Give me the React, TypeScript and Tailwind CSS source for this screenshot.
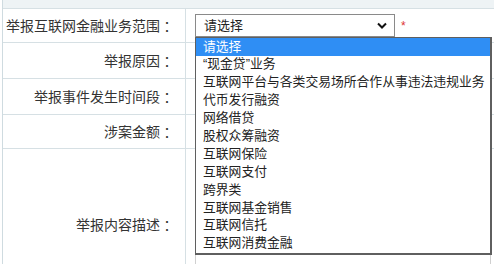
import React from 'react';

const options = [
  '请选择',
  '“现金贷”业务',
  '互联网平台与各类交易场所合作从事违法违规业务',
  '代币发行融资',
  '网络借贷',
  '股权众筹融资',
  '互联网保险',
  '互联网支付',
  '跨界类',
  '互联网基金销售',
  '互联网信托',
  '互联网消费金融',
];

const rows = [
  { label: '举报互联网金融业务范围', h: 'h-[34px]' },
  { label: '举报原因', h: 'h-[36px]' },
  { label: '举报事件发生时间段', h: 'h-[36px]' },
  { label: '涉案金额', h: 'h-[34px]' },
  { label: '举报内容描述', h: 'h-[152px]' },
];

export default function App() {
  return (
    <div className="relative h-[264px] w-[494px] overflow-hidden bg-white pl-[2px] font-['Liberation_Sans','Noto_Sans_CJK_SC',sans-serif] text-[#333]">
      <div className="border-l border-[#cfdbe0]">
        {/* tail of the previous row */}
        <div className="h-[9px] border-b border-[#d6e0e4] bg-[#eef3f5]" />

        {rows.map((row, i) => (
          <div
            key={i}
            className={`grid grid-cols-[183px_1fr] border-b border-[#d6e0e4] ${row.h}`}
          >
            <div className="flex items-center justify-end border-r border-[#d6e0e4] pr-[11px] text-[14px] leading-none whitespace-nowrap">
              {row.label}
              <span className="font-['Noto_Sans_CJK_TC',sans-serif]">：</span>
            </div>
            <div className="relative pl-[9px]">
              {i === 0 && (
                <div className="mt-[5px] flex items-center">
                  <div className="flex h-[23px] w-[200px] items-center justify-between border border-[#8a8a8a] bg-white pl-[8px] pr-[7px] text-[13px] text-[#222]">
                    <span>请选择</span>
                    <svg width="10" height="7" viewBox="0 0 10 7">
                      <path d="M1 1.5 L5 5.5 L9 1.5" fill="none" stroke="#111" strokeWidth="2" />
                    </svg>
                  </div>
                  <span className="ml-[6px] text-[12px] text-[#d33]">*</span>
                </div>
              )}
              {i === 4 && (
                <div className="mt-[8px] h-[110px] w-[296px] border border-[#d0d0d0]" />
              )}
            </div>
          </div>
        ))}
      </div>

      {/* open option list */}
      <ul className="absolute top-[37px] left-[195px] w-[297px] overflow-hidden border border-r-2 border-b-2 border-[#5f5f5f] bg-white text-[12.8px] text-[#222]">
        {options.map((o, i) => (
          <li
            key={o}
            className={`flex h-[17.9px] items-center pl-[7px] leading-none whitespace-nowrap ${
              i === 0 ? 'bg-[#2f8ef4] text-white' : ''
            }`}
          >
            {o}
          </li>
        ))}
      </ul>
    </div>
  );
}
